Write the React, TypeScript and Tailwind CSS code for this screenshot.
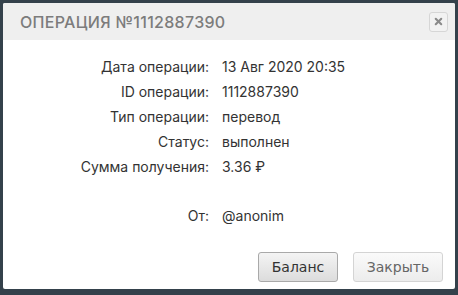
import { X } from "lucide-react"

const rows: [string, string][] = [
  ["Дата операции:", "13 Авг 2020 20:35"],
  ["ID операции:", "1112887390"],
  ["Тип операции:", "перевод"],
  ["Статус:", "выполнен"],
  ["Сумма получения:", "3.36 ₽"],
]

export default function App() {
  return (
    <div className="w-[458px] h-[295px] bg-[#34414b] pt-[3px] pl-[3px] pr-[3px] pb-[6px]">
      <div className="h-full bg-white flex flex-col rounded-[2px] overflow-hidden">
        {/* Header */}
        <div className="h-[37px] bg-[#efefef] flex items-center justify-between pl-[17px] pr-[7px]">
          <h1 className="text-[16px] tracking-[0.3px] text-[#7c7c7c] font-['Inter',sans-serif] font-medium uppercase">
            Операция №1112887390
          </h1>
          <button className="w-[19px] h-[20px] border border-[#d6d6d6] rounded-[3px] bg-[#f2f2f2] flex items-center justify-center">
            <X className="w-[11px] h-[11px] text-[#8a8a8a]" strokeWidth={4.5} />
          </button>
        </div>

        {/* Body */}
        <div className="flex-1 font-['Inter',sans-serif] text-[14px] text-[#333]">
          <div className="pt-[17px] flex flex-col gap-[7px]">
            {rows.map(([label, value]) => (
              <div key={label} className="flex h-[18px] items-center">
                <div className="w-[206px] text-right">{label}</div>
                <div className="pl-[13px]">{value}</div>
              </div>
            ))}
          </div>
          <div className="flex h-[18px] items-center mt-[31px]">
            <div className="w-[206px] text-right">От:</div>
            <div className="pl-[13px]">@anonim</div>
          </div>
        </div>

        {/* Footer */}
        <div className="flex justify-end gap-[15px] pr-[12px] pb-[7px] font-['DejaVu_Sans',sans-serif] text-[14px]">
          <button className="w-[80px] h-[30px] rounded-[3px] border border-[#a9a9a9] bg-gradient-to-b from-[#f4f4f4] to-[#dcdcdc] text-[#333]">
            Баланс
          </button>
          <button className="w-[90px] h-[30px] rounded-[3px] border border-[#d4d4d4] bg-gradient-to-b from-[#fafafa] to-[#ececec] text-[#666]">
            Закрыть
          </button>
        </div>
      </div>
    </div>
  )
}
